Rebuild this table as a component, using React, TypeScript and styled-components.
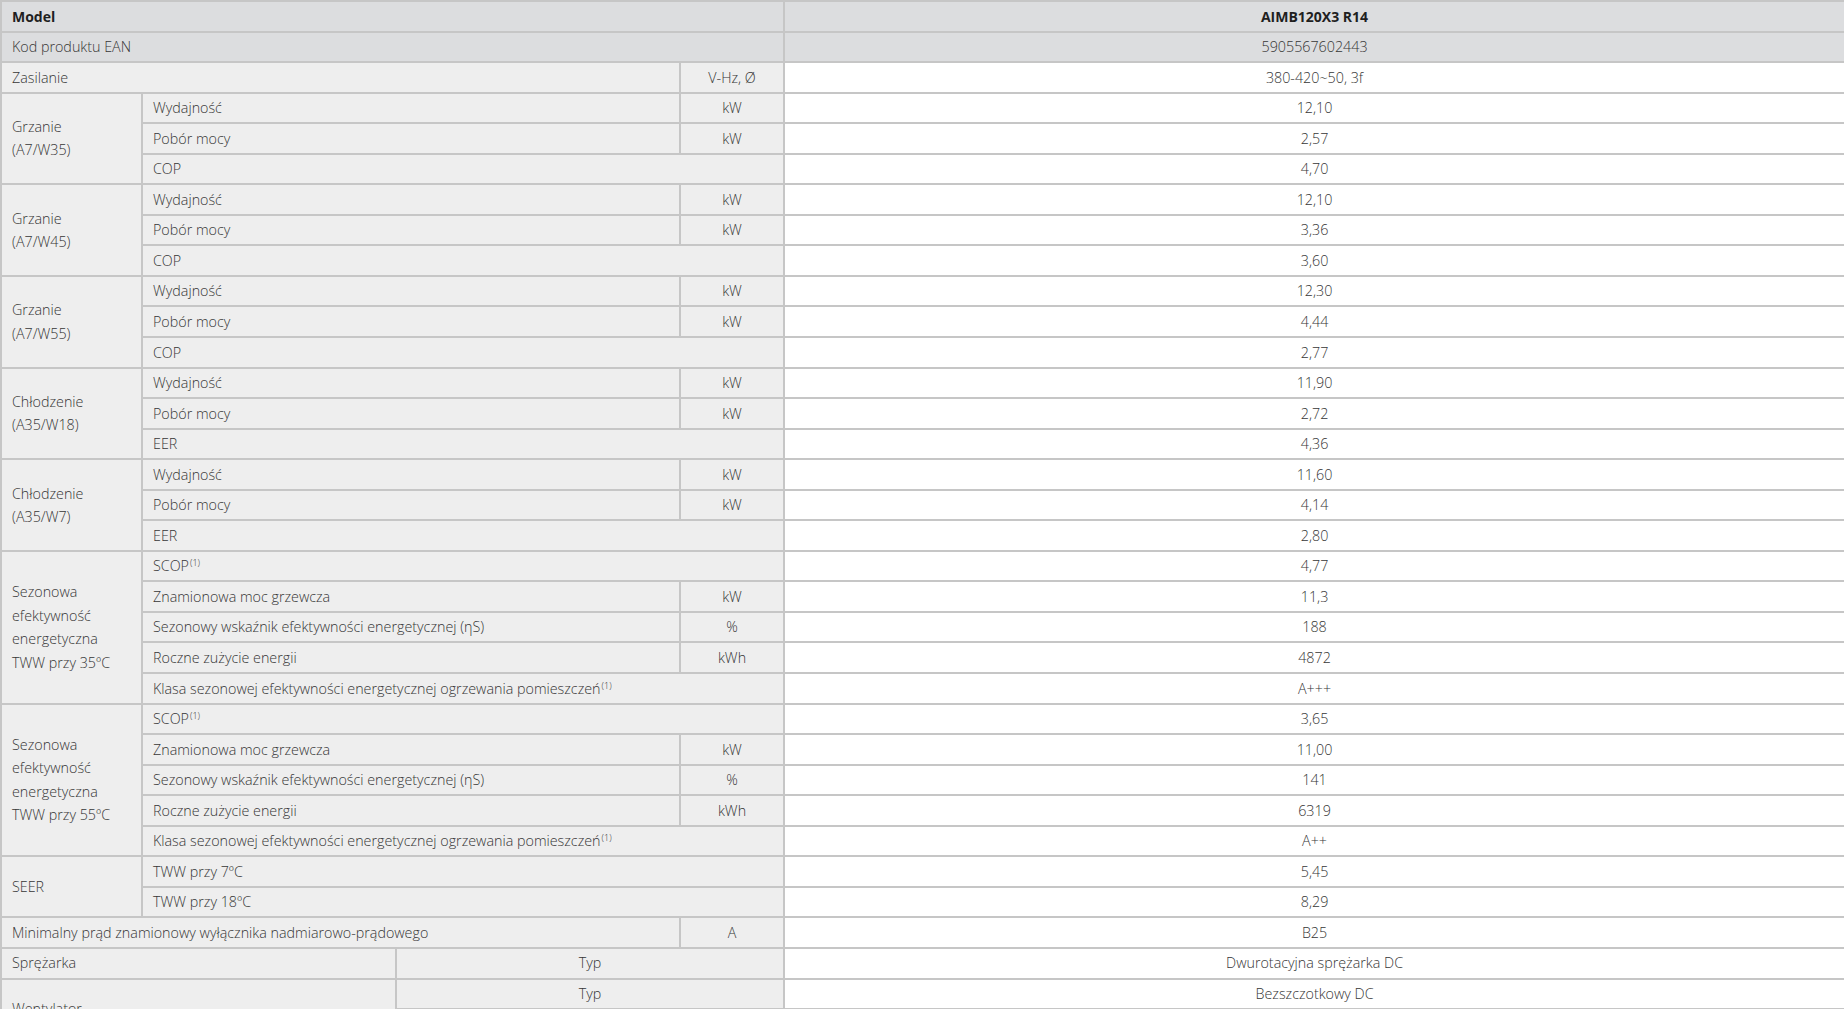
import React from "react";
import styled, { createGlobalStyle } from "styled-components";

const Global = createGlobalStyle`
  html, body { margin: 0; padding: 0; background: #ffffff; }
  body { font-family: "Open Sans", "Liberation Sans", sans-serif; }
`;

const Table = styled.table`
  width: 1844px;
  border-collapse: collapse;
  table-layout: fixed;
  font-family: "Open Sans", "Liberation Sans", sans-serif;
  font-size: 14.3px;
  color: #3c3c3c;
`;

type CellProps = { $kind?: "head" | "label" | "value"; $center?: boolean; $bold?: boolean };

const Cell = styled.td<CellProps>`
  border: 2px solid #c6c6c6;
  padding: 2.5px 10px 2.55px;
  line-height: 23.5px;
  vertical-align: middle;
  white-space: nowrap;
  text-align: ${(p) => (p.$center ? "center" : "left")};
  font-weight: ${(p) => (p.$bold ? 700 : 300)};
  font-size: ${(p) => (p.$bold ? "14px" : "14.3px")};
  color: ${(p) => (p.$bold ? "#1f1f1f" : "#363636")};
  background: ${(p) =>
    p.$kind === "head" ? "#dcdddf" : p.$kind === "value" ? "#ffffff" : "#eeeeee"};
`;

const GroupCell = styled(Cell)`
  white-space: normal;
`;

const Sup = styled.sup`
  font-size: 9px;
  line-height: 0;
  vertical-align: 5px;
  margin-left: 1px;
`;

const Col = styled.col<{ $w: number }>`
  width: ${(p) => p.$w}px;
`;

type Sub = { name: React.ReactNode; unit?: string; value: string };

const one = <Sup>(1)</Sup>;

const groups: { title: React.ReactNode; rows: Sub[] }[] = [
  {
    title: <>Grzanie<br />(A7/W35)</>,
    rows: [
      { name: "Wydajność", unit: "kW", value: "12,10" },
      { name: "Pobór mocy", unit: "kW", value: "2,57" },
      { name: "COP", value: "4,70" },
    ],
  },
  {
    title: <>Grzanie<br />(A7/W45)</>,
    rows: [
      { name: "Wydajność", unit: "kW", value: "12,10" },
      { name: "Pobór mocy", unit: "kW", value: "3,36" },
      { name: "COP", value: "3,60" },
    ],
  },
  {
    title: <>Grzanie<br />(A7/W55)</>,
    rows: [
      { name: "Wydajność", unit: "kW", value: "12,30" },
      { name: "Pobór mocy", unit: "kW", value: "4,44" },
      { name: "COP", value: "2,77" },
    ],
  },
  {
    title: <>Chłodzenie<br />(A35/W18)</>,
    rows: [
      { name: "Wydajność", unit: "kW", value: "11,90" },
      { name: "Pobór mocy", unit: "kW", value: "2,72" },
      { name: "EER", value: "4,36" },
    ],
  },
  {
    title: <>Chłodzenie<br />(A35/W7)</>,
    rows: [
      { name: "Wydajność", unit: "kW", value: "11,60" },
      { name: "Pobór mocy", unit: "kW", value: "4,14" },
      { name: "EER", value: "2,80" },
    ],
  },
  {
    title: <>Sezonowa<br />efektywność<br />energetyczna<br />TWW przy 35ºC</>,
    rows: [
      { name: <>SCOP{one}</>, value: "4,77" },
      { name: "Znamionowa moc grzewcza", unit: "kW", value: "11,3" },
      { name: "Sezonowy wskaźnik efektywności energetycznej (ηS)", unit: "%", value: "188" },
      { name: "Roczne zużycie energii", unit: "kWh", value: "4872" },
      { name: <>Klasa sezonowej efektywności energetycznej ogrzewania pomieszczeń{one}</>, value: "A+++" },
    ],
  },
  {
    title: <>Sezonowa<br />efektywność<br />energetyczna<br />TWW przy 55ºC</>,
    rows: [
      { name: <>SCOP{one}</>, value: "3,65" },
      { name: "Znamionowa moc grzewcza", unit: "kW", value: "11,00" },
      { name: "Sezonowy wskaźnik efektywności energetycznej (ηS)", unit: "%", value: "141" },
      { name: "Roczne zużycie energii", unit: "kWh", value: "6319" },
      { name: <>Klasa sezonowej efektywności energetycznej ogrzewania pomieszczeń{one}</>, value: "A++" },
    ],
  },
  {
    title: "SEER",
    rows: [
      { name: "TWW przy 7ºC", value: "5,45" },
      { name: "TWW przy 18ºC", value: "8,29" },
    ],
  },
];

export default function App() {
  return (
    <>
      <Global />
      <Table>
        <colgroup>
          <Col $w={141} />
          <Col $w={254} />
          <Col $w={284} />
          <Col $w={104} />
          <Col $w={1061} />
        </colgroup>
        <tbody>
          <tr>
            <Cell $kind="head" $bold colSpan={4}>Model</Cell>
            <Cell $kind="head" $bold $center>AIMB120X3 R14</Cell>
          </tr>
          <tr>
            <Cell $kind="head" colSpan={4}>Kod produktu EAN</Cell>
            <Cell $kind="head" $center>5905567602443</Cell>
          </tr>
          <tr>
            <Cell $kind="label" colSpan={3}>Zasilanie</Cell>
            <Cell $kind="label" $center>V-Hz, Ø</Cell>
            <Cell $kind="value" $center>380-420~50, 3f</Cell>
          </tr>
          {groups.map((g, gi) =>
            g.rows.map((r, ri) => (
              <tr key={`${gi}-${ri}`}>
                {ri === 0 && (
                  <GroupCell $kind="label" rowSpan={g.rows.length}>
                    {g.title}
                  </GroupCell>
                )}
                {r.unit ? (
                  <>
                    <Cell $kind="label" colSpan={2}>{r.name}</Cell>
                    <Cell $kind="label" $center>{r.unit}</Cell>
                  </>
                ) : (
                  <Cell $kind="label" colSpan={3}>{r.name}</Cell>
                )}
                <Cell $kind="value" $center>{r.value}</Cell>
              </tr>
            ))
          )}
          <tr>
            <Cell $kind="label" colSpan={3}>Minimalny prąd znamionowy wyłącznika nadmiarowo-prądowego</Cell>
            <Cell $kind="label" $center>A</Cell>
            <Cell $kind="value" $center>B25</Cell>
          </tr>
          <tr>
            <Cell $kind="label" colSpan={2}>Sprężarka</Cell>
            <Cell $kind="label" $center colSpan={2}>Typ</Cell>
            <Cell $kind="value" $center>Dwurotacyjna sprężarka DC</Cell>
          </tr>
          <tr>
            <Cell $kind="label" colSpan={2} rowSpan={2}>Wentylator</Cell>
            <Cell $kind="label" $center colSpan={2}>Typ</Cell>
            <Cell $kind="value" $center>Bezszczotkowy DC</Cell>
          </tr>
          <tr>
            <Cell $kind="label" $center colSpan={2}>Ilość</Cell>
            <Cell $kind="value" $center>1</Cell>
          </tr>
        </tbody>
      </Table>
    </>
  );
}
